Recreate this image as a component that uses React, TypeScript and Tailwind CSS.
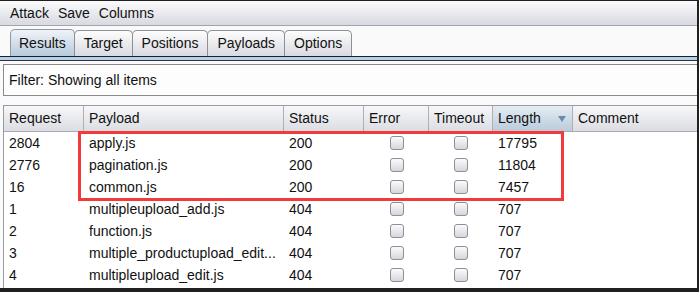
import React from 'react';

type Row = { req: string; payload: string; status: string; length: string };

const rows: Row[] = [
  { req: '2804', payload: 'apply.js', status: '200', length: '17795' },
  { req: '2776', payload: 'pagination.js', status: '200', length: '11804' },
  { req: '16', payload: 'common.js', status: '200', length: '7457' },
  { req: '1', payload: 'multipleupload_add.js', status: '404', length: '707' },
  { req: '2', payload: 'function.js', status: '404', length: '707' },
  { req: '3', payload: 'multiple_productupload_edit...', status: '404', length: '707' },
  { req: '4', payload: 'multipleupload_edit.js', status: '404', length: '707' },
];

const tabs = ['Results', 'Target', 'Positions', 'Payloads', 'Options'];

const Checkbox: React.FC = () => (
  <span className="block h-[14px] w-[14px] rounded-[3px] border border-[#8c8f96] bg-gradient-to-b from-[#fbfbfc] to-[#d5d7dc]" />
);

export default function App() {
  return (
    <div
      className="flex h-[292px] w-[699px] flex-col overflow-hidden bg-[#202020] pt-px pr-[2px] text-[14px] text-[#111]"
      style={{ fontFamily: '"Liberation Sans", Arial, sans-serif' }}
    >
      <div className="flex h-[287px] flex-col bg-[#fafafa]">
        {/* menu bar */}
        <div className="flex h-[25px] shrink-0 items-center gap-[9px] border-b border-[#a3a4ac] bg-gradient-to-b from-[#fcfcfd] to-[#d8d9e1] pl-[10px] leading-none">
          <span>Attack</span>
          <span>Save</span>
          <span>Columns</span>
        </div>

        {/* tabs */}
        <div className="flex h-[30px] shrink-0 items-end pl-[10px]">
          {tabs.map((t, i) =>
            i === 0 ? (
              <div
                key={t}
                className="flex h-[27px] items-center rounded-t-[5px] border border-b-0 border-[#8e99a8] bg-gradient-to-b from-[#f0f4f8] to-[#b7cadc] px-[8px]"
              >
                {t}
              </div>
            ) : (
              <div
                key={t}
                className="-ml-px flex h-[26px] items-center rounded-t-[5px] border border-b-0 border-[#8e9098] bg-gradient-to-b from-[#fdfdfd] to-[#d9dae0] px-[9px]"
              >
                {t}
              </div>
            ),
          )}
        </div>
        <div className="h-px shrink-0 bg-[#14202f]" />
        <div className="h-[3px] shrink-0 bg-[#b9cfe4]" />
        <div className="h-px shrink-0 bg-[#2a3444]" />

        {/* filter */}
        <div className="mt-[3px] ml-[3px] flex h-[32px] shrink-0 items-center border border-r-0 border-[#8a8a8a] bg-[#fdfdfd] pl-[5px]">
          Filter: Showing all items
        </div>

        {/* table */}
        <div className="relative mt-[9px] ml-[3px] flex flex-1 flex-col border-l border-t border-[#9a9aa2] bg-white">
          <div className="grid h-[26px] shrink-0 grid-cols-[80px_200px_80px_65px_64px_80px_1fr] border-b border-[#a9aab2]">
            {['Request', 'Payload', 'Status', 'Error', 'Timeout'].map((h) => (
              <div
                key={h}
                className="flex items-center border-r border-[#aeafb6] bg-gradient-to-b from-[#f7f7f9] to-[#dcdde3] pl-[5px]"
              >
                {h}
              </div>
            ))}
            <div className="flex items-center justify-between border-r border-[#aeafb6] bg-gradient-to-b from-[#e6edf3] to-[#b9cbdb] pr-[6px] pl-[5px]">
              <span>Length</span>
              <svg width="8" height="6" viewBox="0 0 8 6">
                <path d="M0 0h8L4 6z" fill="#6b8bad" />
              </svg>
            </div>
            <div className="flex items-center bg-gradient-to-b from-[#f7f7f9] to-[#dcdde3] pl-[5px]">
              Comment
            </div>
          </div>

          {rows.map((r) => (
            <div
              key={r.req}
              className="grid h-[22px] shrink-0 grid-cols-[80px_200px_80px_65px_64px_80px_1fr] items-center"
            >
              <span className="pl-[5px]">{r.req}</span>
              <span className="pl-[5px]">{r.payload}</span>
              <span className="pl-[5px]">{r.status}</span>
              <span className="flex justify-center">
                <Checkbox />
              </span>
              <span className="flex justify-center">
                <Checkbox />
              </span>
              <span className="pl-[5px]">{r.length}</span>
              <span />
            </div>
          ))}

          {/* highlight box */}
          <div className="pointer-events-none absolute top-[25px] left-[74px] h-[70px] w-[486px] border-[3px] border-[#f23a3a]" />
        </div>
      </div>
    </div>
  );
}
